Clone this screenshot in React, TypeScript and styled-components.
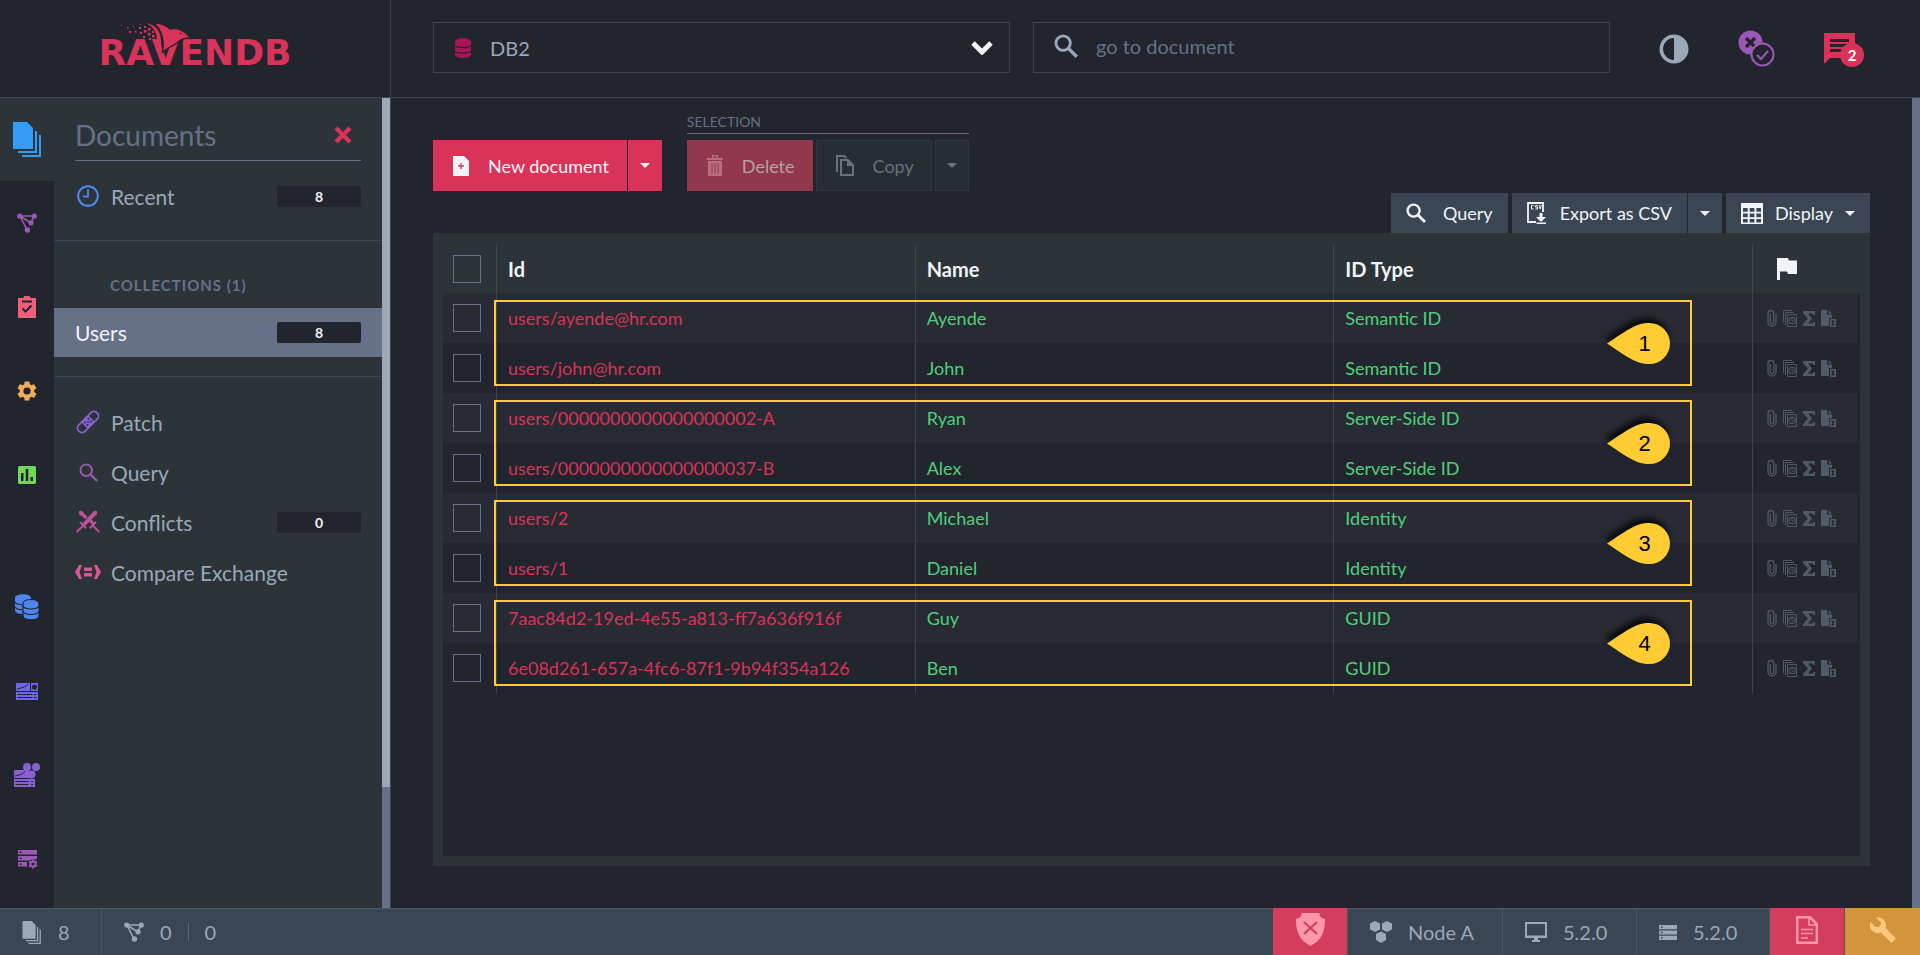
import React from "react";
import styled, { createGlobalStyle } from "styled-components";

const c = {
  bg: "#22252d",
  panel: "#2c343a",
  stripe: "#282b33",
  line: "#3b4654",
  muted: "#667188",
  text: "#9aa8b9",
  white: "#f0f4f8",
  red: "#d93359",
  green: "#50cf7c",
  yellow: "#ffcc33",
};

const GlobalStyle = createGlobalStyle`
  * { box-sizing: border-box; }
  body { margin: 0; background: ${c.bg}; color: ${c.text}; font-family: Lato, "Liberation Sans", sans-serif; font-size: 18px; }
  button, input, select { font: inherit; color: inherit; margin: 0; padding: 0; border: 0; background: none; }
  a { color: inherit; text-decoration: none; }
  svg { display: block; flex: none; }
`;

/* ---------- icons ---------- */

type IconProps = { w: number; h: number; box: string; color?: string; children: React.ReactNode };
const Icon = ({ w, h, box, color = "currentColor", children }: IconProps) => (
  <svg width={w} height={h} viewBox={box} fill={color} aria-hidden="true">
    {children}
  </svg>
);

const DocsIcon = ({ w, h, color }: { w: number; h: number; color?: string }) => (
  <Icon w={w} h={h} box="0 0 29 35" color={color}>
    <path d="M0 0h14l6 6v21H0z" />
    <path d="M22 9h2v22H5v-2h17zM26 13h2v22H9v-2h17z" />
  </Icon>
);
const NodesIcon = ({ color }: { color?: string }) => (
  <Icon w={20} h={20} box="0 0 20 20" color={color}>
    <path d="M3 3h14l-3 7L3 3l7 14" fill="none" stroke={color || "currentColor"} strokeWidth="1.6" />
    <circle cx="2.7" cy="3" r="2.6" /><circle cx="17.3" cy="3" r="2.6" />
    <circle cx="14" cy="9.8" r="2.6" /><circle cx="10.4" cy="17" r="2.7" />
  </Icon>
);
const ClipboardIcon = () => (
  <Icon w={20} h={22} box="0 0 20 22" color="#f0607c">
    <path d="M1 2h5.5a3.5 2.5 0 0 1 7 0H19v20H1z" />
    <path d="M5 5.5h10M5.500 12.500l3 3 6-6" fill="none" stroke={c.bg} strokeWidth="2" />
  </Icon>
);
const GearIcon = () => (
  <Icon w={24} h={24} box="0 0 24 24" color="#f0ad5a">
    <path d="M19.14 12.940c.04-.3.06-.61.06-.94s-.02-.64-.07-.94l2.030-1.580a.49.49 0 0 0 .12-.61l-1.920-3.320a.49.49 0 0 0-.59-.22l-2.390.96a7 7 0 0 0-1.620-.94L14.400 2.810a.48.48 0 0 0-.48-.41h-3.840a.47.47 0 0 0-.47.41l-.36 2.540c-.59.24-1.130.57-1.620.94l-2.390-.96a.47.47 0 0 0-.59.22L2.740 8.870a.47.47 0 0 0 .12.61l2.030 1.580c-.05.3-.09.63-.09.94s.02.64.07.94l-2.030 1.580a.49.49 0 0 0-.12.61l1.920 3.320c.12.22.37.29.59.22l2.390-.96c.5.38 1.030.7 1.620.94l.36 2.540c.05.24.24.41.48.41h3.840c.24 0 .44-.17.47-.41l.36-2.540a7 7 0 0 0 1.620-.94l2.390.96c.22.08.47 0 .59-.22l1.920-3.320a.47.47 0 0 0-.12-.61zM12 15.600a3.600 3.600 0 1 1 0-7.200 3.600 3.600 0 0 1 0 7.200z" />
  </Icon>
);
const ChartIcon = () => (
  <Icon w={18} h={18} box="0 0 18 18" color="#74d65c">
    <rect width="18" height="18" rx="1.500" />
    <path d="M3 7h2.500v8H3zM7.750 3h2.500v12h-2.500zM12.500 11H15v4h-2.500z" fill={c.bg} />
  </Icon>
);
const DatabasesIcon = () => (
  <Icon w={26} h={26} box="0 0 26 26" color="#4d86ee">
    <path d="M1 4c0-5 16-5 16 0v16H9C3 20 1 18 1 16z" />
    <path d="M1 8c2 3 6 3 9 3M1 13c2 3 6 3 9 3" fill="none" stroke={c.bg} strokeWidth="1.200" />
    <path d="M9 10c0-6 16-6 16 0v12c0 5-16 5-16 0z" stroke={c.bg} strokeWidth="1.200" />
    <path d="M9 12c2 4 14 4 16 0M9 17.500c2 4 14 4 16 0" fill="none" stroke={c.bg} strokeWidth="1.200" />
  </Icon>
);
const DashboardIcon = () => (
  <Icon w={22} h={17} box="0 0 22 17" color="#6f66f0">
    <path d="M0 0h14v8H0zM15 0h7v8h-7zM0 9h22v8H0z" />
    <path d="M1 6l4-1 3-1 4-2.500M1.500 11.500h15M1.500 14.500h15M18 11.500h2.500M18 14.500h2.500" fill="none" stroke={c.bg} strokeWidth="1" />
    <circle cx="18.500" cy="4" r="2.600" fill={c.bg} />
  </Icon>
);
const ClusterDashboardIcon = () => (
  <Icon w={26} h={24} box="0 0 26 24" color="#8660d4">
    <path d="M0 7h15v8H0zM0 16h21v8H0z" />
    <path d="M1 13l4-1 3-1 3-2.500M1.500 18.500h13M1.500 21.500h13M17 18.500h2M17 21.500h2" fill="none" stroke={c.bg} strokeWidth="1" />
    <circle cx="13" cy="4" r="4" /><circle cx="22" cy="4" r="4" /><circle cx="17.500" cy="11.500" r="4" />
  </Icon>
);
const ServerGearIcon = () => (
  <Icon w={21} h={19} box="0 0 21 19" color="#9b59b6">
    <path d="M1 0h19v4.500H1zM1 6h19v3l-6 1.500H1zM1 12h9v4.500H1z" />
    <path d="M2.500 1.500h2v1.500h-2zM2.500 7.500h2V9h-2zM2.500 13.500h2V15h-2z" fill={c.bg} />
    <circle cx="16" cy="14" r="4.500" fill={c.bg} />
    <circle cx="16" cy="14" r="2.600" fill="none" stroke="#9b59b6" strokeWidth="2" />
    <path d="M16 9.500v2M16 16.500v2M12 11.700l1.700 1M18.300 15.300l1.700 1M12 16.300l1.700-1M18.300 12.700l1.700-1" stroke="#9b59b6" strokeWidth="2" />
  </Icon>
);
const ClockIcon = () => (
  <Icon w={22} h={22} box="0 0 22 22" color="none">
    <circle cx="11" cy="11" r="9.800" stroke="#4d86ee" strokeWidth="2" />
    <path d="M11 4v7.500H6" stroke="#4d86ee" strokeWidth="1.800" />
  </Icon>
);
const PatchIcon = () => (
  <Icon w={24} h={24} box="0 0 24 24" color="none">
    <g transform="rotate(-45 12 12)" stroke="#8660d4">
      <rect x="-1" y="7.500" width="26" height="9" rx="4.500" strokeWidth="1.800" />
      <rect x="7" y="7.500" width="10" height="9" fill="#8660d4" stroke="none" />
      <g fill={c.panel} stroke="none">
        <circle cx="9.500" cy="10.200" r="1" /><circle cx="14.500" cy="10.200" r="1" /><circle cx="12" cy="12" r="1" />
        <circle cx="9.500" cy="13.800" r="1" /><circle cx="14.500" cy="13.800" r="1" />
      </g>
    </g>
  </Icon>
);
const SearchIcon = ({ size, color, weight = 2.4 }: { size: number; color: string; weight?: number }) => (
  <Icon w={size} h={size} box="0 0 20 20" color="none">
    <circle cx="7.600" cy="7.600" r="6" stroke={color} strokeWidth={weight} />
    <path d="M12 12l7 7" stroke={color} strokeWidth={weight + 0.4} />
  </Icon>
);
const SwordsIcon = () => (
  <Icon w={24} h={22} box="0 0 24 22" color="#c0529c">
    <path d="M18 0h3v3L9 15l-2.500-2.500zM3 0h3l5.500 6-2 2L3 3zM13.500 10.500l2-2 3 3.500-2 2z" />
    <path d="M4 11l6 6M8 14l-7.500 7M20 11l-6 6M16 14l7.500 7" stroke="#c0529c" strokeWidth="1.800" />
  </Icon>
);
const CompareIcon = () => (
  <Icon w={26} h={14} box="0 0 26 14" color="#dc5596">
    <path d="M4 0h3L4.500 7 7 14H4L0 7zM22 0h-3l2.500 7L19 14h3l4-7zM9 2.500h8V6H9zM9 8h8v3.500H9z" />
  </Icon>
);
const CloseIcon = () => (
  <Icon w={18} h={18} box="0 0 18 18" color="none">
    <path d="M2 2l14 14M16 2L2 16" stroke={c.red} strokeWidth="4.400" />
  </Icon>
);
const DbIcon = () => (
  <Icon w={18} h={20} box="0 0 18 20" color="#ad1457">
    <path d="M1 3.500C1-1 17-1 17 3.500v13c0 4.500-16 4.500-16 0z" />
    <path d="M0 7.500c3 2.700 15 2.700 18 0M0 13c3 2.700 15 2.700 18 0" fill="none" stroke={c.bg} strokeWidth="1.200" />
  </Icon>
);
const ChevronIcon = () => (
  <Icon w={22} h={14} box="0 0 22 14" color="none">
    <path d="M2 2l9 9 9-9" stroke={c.white} strokeWidth="5" />
  </Icon>
);
const ContrastIcon = () => (
  <Icon w={30} h={30} box="0 0 30 30" color={c.text}>
    <circle cx="15" cy="15" r="12.700" fill="none" stroke={c.text} strokeWidth="3.600" />
    <path d="M15 3a12 12 0 0 1 0 24z" />
  </Icon>
);
const StatesIcon = () => (
  <Icon w={37} h={37} box="0 0 37 37" color="#9b59b6">
    <circle cx="12.500" cy="12.500" r="12" />
    <path d="M8 8l9 9M17 8l-9 9" stroke={c.bg} strokeWidth="3.200" />
    <circle cx="24.500" cy="24.500" r="11" fill={c.bg} stroke="#9b59b6" strokeWidth="2" />
    <path d="M19 25l4 4 7-8" fill="none" stroke="#9b59b6" strokeWidth="2" />
  </Icon>
);
const ChatIcon = () => (
  <Icon w={31} h={31} box="0 0 31 31" color={c.red}>
    <path d="M0 0h31v25H6l-6 6z" />
    <path d="M6 7.500h19M6 12.500h19M6 17.500h19" stroke={c.bg} strokeWidth="3" />
  </Icon>
);
const NewDocIcon = () => (
  <Icon w={16} h={20} box="0 0 16 20" color={c.white}>
    <path d="M0 0h11l5 5v15H0z" />
    <path d="M8 7v6M5 10h6" stroke={c.red} strokeWidth="1.400" />
  </Icon>
);
const TrashIcon = () => (
  <Icon w={16} h={21} box="0 0 16 21" color="#b96d7d">
    <path d="M0 3h5V0h6v3h5v2H0zM1 6h14v15H1zM6.500 1.500V3h3V1.500z" fillRule="evenodd" />
    <path d="M5 8.500v10M8 8.500v10M11 8.500v10" stroke="#93374d" strokeWidth="1" />
  </Icon>
);
const CopyIcon = () => (
  <Icon w={18} h={21} box="0 0 18 21" color="#69727d">
    <path d="M1 17V1h7l2.500 2" fill="none" stroke="#69727d" strokeWidth="2" />
    <path d="M5 5h7l5 5v10H5z" fill="none" stroke="#69727d" strokeWidth="2" />
    <path d="M11 5l6 6h-6z" />
  </Icon>
);
const CsvIcon = () => (
  <Icon w={20} h={22} box="0 0 20 22" color={c.white}>
    <path d="M9 20H1V1h15v9" fill="none" stroke={c.white} strokeWidth="1.800" />
    <path d="M6.500 3.500h-2v3.500h2M10.500 3.500h-2v1.500h2v2h-2M12 3l1.200 4 1.200-4" fill="none" stroke={c.white} strokeWidth="1" />
    <path d="M12.500 11h3v4H19l-5 5-5-5h3.500zM9.500 20.500H19V22H9.500z" />
  </Icon>
);
const GridIcon = () => (
  <Icon w={22} h={21} box="0 0 22 21" color={c.white}>
    <path d="M0 0h22v21H0z" />
    <path d="M2 5h4.700v3.700H2zM8.700 5h4.700v3.700H8.700zM15.400 5H20v3.700h-4.600zM2 10.500h4.700v3.700H2zM8.700 10.500h4.700v3.700H8.700zM15.400 10.500H20v3.700h-4.600zM2 16h4.700v3.500H2zM8.700 16h4.700v3.500H8.700zM15.400 16H20v3.500h-4.600z" fill={c.line} />
  </Icon>
);
const FlagIcon = () => (
  <Icon w={20} h={22} box="0 0 20 22" color={c.white}>
    <path d="M0 0h11l1 2.500h8V16h-9l-1-2.500H3V22H0z" />
  </Icon>
);
const Caret = () => (
  <Icon w={10} h={5} box="0 0 10 5">
    <path d="M0 0h10L5 5z" />
  </Icon>
);
const ClipIcon = () => (
  <Icon w={10} h={17} box="0 0 10 17" color="none">
    <path d="M3.200 4v8a1.800 1.800 0 0 0 3.600 0V3.500a2.500 2.500 0 0 0-5.800 0V12a4 4 0 0 0 8 0V4" stroke="#4f5965" strokeWidth="1.300" />
  </Icon>
);
const RevisionsIcon = () => (
  <Icon w={14} h={17} box="0 0 14 17" color="none">
    <path d="M.500 13V.500H9M2.500 15V2.500H11M4.500 4.500h9v12h-9z" stroke="#4f5965" />
    <circle cx="9" cy="10.500" r="3.200" stroke="#4f5965" strokeWidth="1.200" />
    <path d="M9 8.500v2.500h1.800" stroke="#4f5965" />
  </Icon>
);
const SigmaIcon = () => (
  <Icon w={12} h={15} box="0 0 12 15" color="#515b67">
    <path d="M0 0h12v4h-1.500L10 2.500H5l4 5-4 5h5l.500-1.500H12v4H0v-2l5-5.500L0 2z" />
  </Icon>
);
const ExpirationIcon = () => (
  <Icon w={15} h={17} box="0 0 15 17" color="#515b67">
    <path d="M0 0h6v4.500h5V8H8v8H0z" />
    <path d="M7.500 0L11 3.500H7.500z" />
    <path d="M9 9h6v8H9zM10.500 10.500v1l1 1.500-1 1.500v1h3v-1l-1-1.500 1-1.500v-1z" fillRule="evenodd" />
  </Icon>
);
const ShieldIcon = () => (
  <Icon w={29} h={33} box="0 0 29 33" color="#ff97ab">
    <path d="M5.500 0h18c0 4 2 5 5.500 6 0 12-3 21-14.500 27C3 27 0 18 0 6c3.500-1 5.500-2 5.500-6z" />
    <path d="M8 9l13 12M21 9L8 21" stroke="#d43e5c" strokeWidth="2.200" />
  </Icon>
);
const HexIcon = () => (
  <Icon w={22} h={22} box="0 0 22 22">
    <path d="M5 0l5 2.500v6L5 11 0 8.500v-6zM17 0l5 2.500v6L17 11l-5-2.500v-6zM11 10.500l5 2.500v6L11 22l-5-3v-6z" />
  </Icon>
);
const MonitorIcon = () => (
  <Icon w={22} h={20} box="0 0 22 20">
    <path d="M0 0h22v16h-9v2h2v2H7v-2h2v-2H0zM2 2v11.500h18V2z" fillRule="evenodd" />
  </Icon>
);
const ServerIcon = () => (
  <Icon w={18} h={15} box="0 0 18 15">
    <path d="M0 0h18v4.200H0zM0 5.400h18v4.200H0zM0 10.800h18V15H0z" />
    <path d="M2 1.400h1.500v1.500H2zM2 6.800h1.500v1.500H2zM2 12.200h1.500v1.500H2z" fill={c.line} />
  </Icon>
);
const LogIcon = () => (
  <Icon w={22} h={28} box="0 0 22 28" color="none">
    <path d="M1.200 1.200H14L20.800 8v18.800H1.200z" stroke="#ff97ab" strokeWidth="2.400" />
    <path d="M13 1l8 8h-8zM5 13.500h12M5 17.500h12M5 22h7" stroke="#ff97ab" strokeWidth="1.600" />
  </Icon>
);
const WrenchIcon = () => (
  <Icon w={26} h={26} box="0 0 26 26" color="#ffc97d">
    <path d="M6 .500a8 8 0 0 1 9.500 10.500L26 21.500 21.500 26 11 15.500A8 8 0 0 1 .500 5L5.500 10h3L11 7.500v-2z" />
  </Icon>
);
const Bird = () => (
  <svg viewBox="0 0 72 31" width="72" height="31" fill={c.red} aria-hidden="true">
    <path d="M34 0c7 0 13 3 16 6 4-1 7-.500 10 .500 4 1.500 8 5 10.500 9-5-1-9 0-13 4-5 4-10 5.500-15 9.500 2-11 0-21-8.500-29z" stroke={c.bg} strokeWidth="1.400" />
    <path d="M26 0c6 1 11 4 13.500 10 1.800 5 2 12 1.500 18-4-5-3.500-10-4.500-15C35 7 32 3 26 0z" />
    <circle cx="60.500" cy="10.500" r=".8" fill={c.bg} />
    <path d="M1 2h1v1H1zM7 4h1.500v1.500H7zM9 8h2v2H9zM13 3h1v1h-1zM15 8h1.500v1.500H15zM19 4h2v2h-2zM20 9h2v2h-2zM24 3h2v2h-2zM24 7h2.500v2.500H24zM23 13h2v2h-2zM28 5h2.500v2.500H28zM28 10h2.500v2.500H28zM29 15h2v2h-2zM32 8h2v2h-2zM32 12h2.500v2.500H32zM34 17h1.500v1.500H34zM20 1h1v1h-1z" />
  </svg>
);

/* ---------- page frame ---------- */

const Page = styled.div`
  min-height: 100vh;
  display: flex;
  flex-direction: column;
`;
const Header = styled.header`
  display: flex;
  height: 98px;
  border-bottom: 1px solid ${c.line};
`;
const LogoCell = styled.div`
  width: 391px;
  flex: none;
  border-right: 1px solid ${c.line};
  display: flex;
  justify-content: center;
  padding-top: 33px;
`;
const Logo = styled.a`
  position: relative;
  color: ${c.red};
  font: bold 36px/40px "DejaVu Sans", sans-serif;
  svg { position: absolute; top: -10px; left: 22px; }
`;
const HeaderTools = styled.div`
  flex: 1;
  display: flex;
  padding-left: 42px;
`;
const Fields = styled.div`
  flex: 1;
  display: flex;
  gap: 23px;
  padding-top: 22px;
`;
const Field = styled.label<{ $search?: boolean }>`
  flex: 1;
  display: flex;
  align-items: center;
  height: 51px;
  padding: 0 16px ${(p) => (p.$search ? 4 : 0)}px 20px;
  border: 1px solid ${c.line};
  font-size: 20px;
  select, input { flex: 1; min-width: 0; margin-left: 18px; outline: none; appearance: none; }
  input::placeholder { color: ${c.muted}; opacity: 1; }
`;
const HeaderIcons = styled.div`
  width: 310px;
  display: flex;
  align-items: center;
  justify-content: space-between;
  padding: 0 65px 0 49px;
`;
const IconButton = styled.button`
  display: flex;
  position: relative;
  cursor: pointer;
`;
const Count = styled.span`
  position: absolute;
  left: 16px;
  top: 10px;
  width: 24px;
  height: 24px;
  border-radius: 50%;
  background: ${c.red};
  color: #fff;
  font-weight: 700;
  font-size: 15px;
  line-height: 24px;
  text-align: center;
`;
const Body = styled.div`
  flex: 1;
  display: flex;
`;

/* ---------- left rail and menu ---------- */

const Rail = styled.nav`
  width: 54px;
  flex: none;
  display: flex;
  flex-direction: column;
  justify-content: space-between;
  padding-bottom: 7px;
`;
const RailItem = styled.a<{ $active?: boolean }>`
  display: flex;
  align-items: center;
  justify-content: center;
  height: ${(p) => (p.$active ? 83 : 84)}px;
  background: ${(p) => (p.$active ? c.panel : "transparent")};
`;
const Menu = styled.nav`
  width: 328px;
  flex: none;
  background: ${c.panel};
  font-size: 21px;
`;
const MenuTitle = styled.div`
  display: flex;
  align-items: center;
  justify-content: space-between;
  height: 63px;
  margin: 0 21px;
  padding: 12px 9px 0 0;
  border-bottom: 1px solid ${c.muted};
  h1 { margin: 0; font-size: 28px; font-weight: 400; line-height: 34px; color: ${c.muted}; }
`;
const MenuGroup = styled.div<{ $last?: boolean }>`
  padding: ${(p) => (p.$last ? 20 : 10)}px 0 19px;
  & + & { border-top: 1px solid ${c.line}; }
`;
const MenuHeading = styled.h2`
  margin: 20px 0 9px 56px;
  font-size: 15px;
  line-height: 28px;
  letter-spacing: 1px;
  color: ${c.muted};
`;
const MenuItem = styled.a<{ $selected?: boolean }>`
  display: flex;
  align-items: center;
  height: ${(p) => (p.$selected ? 49 : 50)}px;
  padding: 0 21px;
  background: ${(p) => (p.$selected ? c.muted : "transparent")};
  color: ${(p) => (p.$selected ? c.white : c.text)};
`;
const MenuIcon = styled.span`
  width: 26px;
  margin-right: 10px;
  flex: none;
  display: flex;
  justify-content: center;
`;
const Badge = styled.span`
  margin-left: auto;
  width: 84px;
  border-radius: 2px;
  background: ${c.bg};
  color: ${c.white};
  font-size: 14px;
  font-weight: 700;
  line-height: 21px;
  text-align: center;
`;
const ScrollTrack = styled.div`
  width: 8px;
  flex: none;
  background: ${c.muted};
`;
const ScrollThumb = styled.div`
  height: 85%;
  background: ${c.text};
`;

/* ---------- main ---------- */

const Main = styled.main`
  flex: 1;
  min-width: 0;
  display: flex;
  flex-direction: column;
  padding: 16px 42px 42px;
  border-left: 1px solid ${c.line};
`;
const Toolbar = styled.div`
  display: flex;
  align-items: flex-end;
  gap: 25px;
`;
const ButtonRow = styled.div<{ $gap: number }>`
  display: flex;
  gap: ${(p) => p.$gap}px;
`;
const SelectionLabel = styled.div`
  margin-bottom: 6px;
  padding-bottom: 3px;
  border-bottom: 1px solid ${c.muted};
  color: ${c.muted};
  font-size: 14px;
  line-height: 16px;
`;
const tones = {
  primary: { bg: c.red, fg: c.white, line: c.red },
  danger: { bg: "#93374d", fg: "#b4a0a9", line: "#93374d" },
  faded: { bg: "#272d34", fg: "#69727d", line: "#2e3742" },
};
const ActionButton = styled.button<{ $tone: keyof typeof tones; $caret?: boolean }>`
  display: flex;
  align-items: center;
  justify-content: center;
  gap: 19px;
  height: 51px;
  padding: ${(p) => (p.$caret ? "0 11px" : "0 17px 0 19px")};
  background: ${(p) => tones[p.$tone].bg};
  color: ${(p) => tones[p.$tone].fg};
  border: 1px solid ${(p) => tones[p.$tone].line};
`;
const ViewBar = styled.div`
  display: flex;
  justify-content: flex-end;
  gap: 4px;
  margin-top: 2px;
`;
const ViewButton = styled.button<{ $gap?: number; $caret?: boolean }>`
  display: flex;
  align-items: center;
  gap: ${(p) => p.$gap ?? 12}px;
  height: 40px;
  padding: 0 ${(p) => (p.$caret ? 12 : 15)}px;
  background: ${c.line};
  color: ${c.white};
`;
const GridPanel = styled.section`
  position: relative;
  flex: 1;
  display: flex;
  flex-direction: column;
  padding: 12px 10px 10px;
  background: ${c.panel};
`;
const GridBody = styled.div`
  flex: 1;
  padding-right: 2px;
  background: linear-gradient(${c.panel} 48px, ${c.bg} 48px);
`;
const Table = styled.table`
  width: 100%;
  table-layout: fixed;
  border-collapse: separate;
  border-spacing: 0;
  text-align: left;
  th, td { padding: 0 0 0 11px; border-left: 1px solid ${c.line}; }
  th:first-child, td:first-child { padding-left: 10px; border-left: 0; width: 53px; }
  th:last-child, td:last-child { width: 106px; padding-left: 14px; }
  th { height: 48px; font-size: 20px; color: ${c.white}; }
  td { height: 50px; color: ${c.green}; }
  tbody tr:nth-child(odd) { background: ${c.stripe}; }
`;
const Check = styled.input`
  display: block;
  appearance: none;
  width: 28px;
  height: 28px;
  border: 1px solid ${c.muted};
`;
const DocLink = styled.a`
  color: ${c.red};
`;
const Flags = styled.span`
  display: flex;
  align-items: center;
  gap: 6px;
`;
const FlagCell = styled.span`
  display: block;
  padding-left: 10px;
`;
const Highlights = styled.ol`
  position: absolute;
  top: 67px;
  left: 61px;
  right: 178px;
  margin: 0;
  padding: 0;
  list-style: none;
  display: grid;
  gap: 14px;
  pointer-events: none;
`;
const Highlight = styled.li`
  height: 86px;
  border: 2px solid ${c.yellow};
  display: flex;
  align-items: center;
  justify-content: flex-end;
  padding-right: 20px;
`;
const Marker = styled.span`
  position: relative;
  isolation: isolate;
  width: 63px;
  height: 41px;
  padding-left: 12px;
  color: #000;
  font: 22px/41px "Liberation Sans", sans-serif;
  text-align: center;
  svg { position: absolute; inset: 0; z-index: -1; overflow: visible; filter: drop-shadow(-2px -5px 3px rgba(0, 0, 0, 0.8)); }
`;

/* ---------- footer ---------- */

const Footer = styled.footer`
  display: flex;
  height: 47px;
  background: ${c.line};
  border-top: 1px solid #505a65;
  font-size: 20px;
`;
const FootCell = styled.a<{ $width: number; $open?: boolean }>`
  display: flex;
  align-items: center;
  gap: 16px;
  width: ${(p) => p.$width}px;
  padding-left: 22px;
  border-right: ${(p) => (p.$open ? 0 : 1)}px solid #4b5663;
`;
const FootBlock = styled.a<{ $bg: string }>`
  display: flex;
  align-items: center;
  justify-content: center;
  width: 75px;
  margin-top: -1px;
  padding-bottom: 4px;
  background: ${(p) => p.$bg};
  border-right: 1px solid #4b5663;
  &:last-child { border: 0; }
`;
const Divider = styled.span`
  width: 1px;
  height: 18px;
  background: #5d6775;
`;
const Spacer = styled.span`
  flex: 1;
`;

const rows = [
  ["users/ayende@hr.com", "Ayende", "Semantic ID"],
  ["users/john@hr.com", "John", "Semantic ID"],
  ["users/0000000000000000002-A", "Ryan", "Server-Side ID"],
  ["users/0000000000000000037-B", "Alex", "Server-Side ID"],
  ["users/2", "Michael", "Identity"],
  ["users/1", "Daniel", "Identity"],
  ["7aac84d2-19ed-4e55-a813-ff7a636f916f", "Guy", "GUID"],
  ["6e08d261-657a-4fc6-87f1-9b94f354a126", "Ben", "GUID"],
];

const railTop = [
  { name: "Documents", icon: <DocsIcon w={29} h={35} color="#339cf5" /> },
  { name: "Indexes", icon: <NodesIcon color="#9b59b6" /> },
  { name: "Tasks", icon: <ClipboardIcon /> },
  { name: "Settings", icon: <GearIcon /> },
  { name: "Stats", icon: <ChartIcon /> },
];
const railBottom = [
  { name: "Databases", icon: <DatabasesIcon /> },
  { name: "Server dashboard", icon: <DashboardIcon /> },
  { name: "Cluster dashboard", icon: <ClusterDashboardIcon /> },
  { name: "Manage server", icon: <ServerGearIcon /> },
];

type EntryProps = { icon: React.ReactNode; label: string; count?: number };
const MenuEntry = ({ icon, label, count }: EntryProps) => (
  <MenuItem href="#">
    <MenuIcon>{icon}</MenuIcon>
    {label}
    {count !== undefined && <Badge>{count}</Badge>}
  </MenuItem>
);

export default function App() {
  return (
    <Page>
      <GlobalStyle />
      <Header>
        <LogoCell>
          <Logo href="#">RAVENDB<Bird /></Logo>
        </LogoCell>
        <HeaderTools>
          <Fields>
            <Field>
              <DbIcon />
              <select aria-label="Database"><option>DB2</option></select>
              <ChevronIcon />
            </Field>
            <Field $search>
              <SearchIcon size={24} color={c.text} />
              <input type="text" aria-label="Go to document" placeholder="go to document" />
            </Field>
          </Fields>
          <HeaderIcons>
            <IconButton aria-label="Theme"><ContrastIcon /></IconButton>
            <IconButton aria-label="Status"><StatesIcon /></IconButton>
            <IconButton aria-label="Notifications"><ChatIcon /><Count>2</Count></IconButton>
          </HeaderIcons>
        </HeaderTools>
      </Header>

      <Body>
        <Rail>
          <div>
            {railTop.map((r, i) => (
              <RailItem key={r.name} href="#" aria-label={r.name} $active={i === 0}>{r.icon}</RailItem>
            ))}
          </div>
          <div>
            {railBottom.map((r) => (
              <RailItem key={r.name} href="#" aria-label={r.name}>{r.icon}</RailItem>
            ))}
          </div>
        </Rail>
        <Menu>
          <MenuTitle>
            <h1>Documents</h1>
            <IconButton aria-label="Close"><CloseIcon /></IconButton>
          </MenuTitle>
          <MenuGroup>
            <MenuEntry icon={<ClockIcon />} label="Recent" count={8} />
          </MenuGroup>
          <MenuGroup>
            <MenuHeading>COLLECTIONS (1)</MenuHeading>
            <MenuItem href="#" $selected>Users<Badge>8</Badge></MenuItem>
          </MenuGroup>
          <MenuGroup $last>
            <MenuEntry icon={<PatchIcon />} label="Patch" />
            <MenuEntry icon={<SearchIcon size={19} color="#9b59b6" weight={2} />} label="Query" />
            <MenuEntry icon={<SwordsIcon />} label="Conflicts" count={0} />
            <MenuEntry icon={<CompareIcon />} label="Compare Exchange" />
          </MenuGroup>
        </Menu>
        <ScrollTrack><ScrollThumb /></ScrollTrack>

        <Main>
          <Toolbar>
            <ButtonRow $gap={1}>
              <ActionButton $tone="primary"><NewDocIcon />New document</ActionButton>
              <ActionButton $tone="primary" $caret aria-label="More new document options"><Caret /></ActionButton>
            </ButtonRow>
            <div>
              <SelectionLabel>SELECTION</SelectionLabel>
              <ButtonRow $gap={3}>
                <ActionButton $tone="danger"><TrashIcon />Delete</ActionButton>
                <ActionButton $tone="faded"><CopyIcon />Copy</ActionButton>
                <ActionButton $tone="faded" $caret aria-label="More copy options"><Caret /></ActionButton>
              </ButtonRow>
            </div>
          </Toolbar>
          <ViewBar>
            <ViewButton $gap={17}><SearchIcon size={20} color={c.white} />Query</ViewButton>
            <ButtonRow $gap={1}>
              <ViewButton $gap={13}><CsvIcon />Export as CSV</ViewButton>
              <ViewButton $caret aria-label="Export options"><Caret /></ViewButton>
            </ButtonRow>
            <ViewButton><GridIcon />Display<Caret /></ViewButton>
          </ViewBar>
          <GridPanel>
            <GridBody>
              <Table>
                <thead>
                  <tr>
                    <th><Check type="checkbox" aria-label="Select all" /></th>
                    <th>Id</th>
                    <th>Name</th>
                    <th>ID Type</th>
                    <th aria-label="Flags"><FlagCell><FlagIcon /></FlagCell></th>
                  </tr>
                </thead>
                <tbody>
                  {rows.map(([id, name, type]) => (
                    <tr key={id}>
                      <td><Check type="checkbox" aria-label={id} /></td>
                      <td><DocLink href="#">{id}</DocLink></td>
                      <td>{name}</td>
                      <td>{type}</td>
                      <td><Flags><ClipIcon /><RevisionsIcon /><SigmaIcon /><ExpirationIcon /></Flags></td>
                    </tr>
                  ))}
                </tbody>
              </Table>
            </GridBody>
            <Highlights>
              {[1, 2, 3, 4].map((n) => (
                <Highlight key={n}>
                  <Marker>
                    <svg width="63" height="41" viewBox="0 0 63 41" fill={c.yellow} aria-hidden="true">
                      <path d="M0 20.500C10 14 22 5 32 1.500 36 0 39 0 42.500 0a20.500 20.500 0 0 1 0 41c-3.500 0-6.500 0-10.500-1.500C22 36 10 27 0 20.500z" />
                    </svg>
                    {n}
                  </Marker>
                </Highlight>
              ))}
            </Highlights>
          </GridPanel>
        </Main>
        <ScrollTrack />
      </Body>

      <Footer>
        <FootCell href="#" $width={102}><DocsIcon w={20} h={23} />8</FootCell>
        <FootCell href="#" $width={140} $open><NodesIcon />0<Divider />0</FootCell>
        <Spacer />
        <FootBlock href="#" $bg="#d43e5c" aria-label="Security"><ShieldIcon /></FootBlock>
        <FootCell href="#" $width={155}><HexIcon />Node A</FootCell>
        <FootCell href="#" $width={134}><MonitorIcon />5.2.0</FootCell>
        <FootCell href="#" $width={133}><ServerIcon />5.2.0</FootCell>
        <FootBlock href="#" $bg="#d43e5c" aria-label="Log"><LogIcon /></FootBlock>
        <FootBlock href="#" $bg="#d4943c" aria-label="Tools"><WrenchIcon /></FootBlock>
      </Footer>
    </Page>
  );
}
